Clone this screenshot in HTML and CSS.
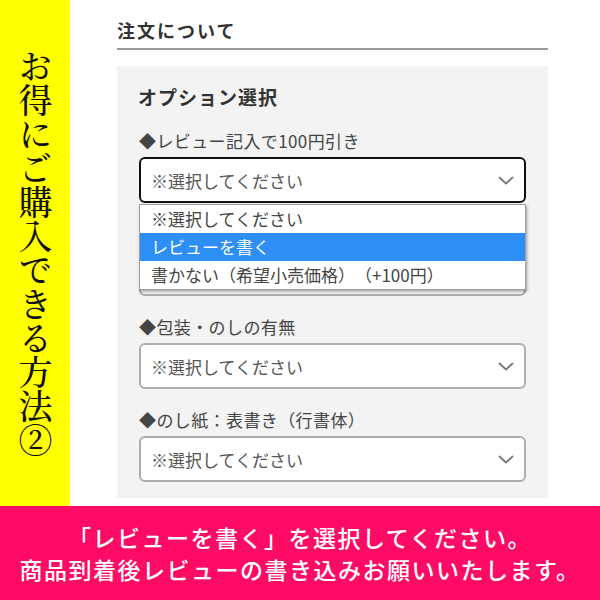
FILE: index.html
```html
<!DOCTYPE html>
<html lang="ja">
<head>
  <meta charset="UTF-8">
  <meta name="viewport" content="width=device-width, initial-scale=1.0">
  <title>お得にご購入できる方法②</title>
  <link rel="stylesheet" href="styles.css">
</head>
<body>
  <div class="top">
    <div class="side">
      <p class="side-title">お得にご購入できる方法②</p>
    </div>

    <div class="main">
      <h1 class="section-title">注文について</h1>

      <div class="panel">
        <h2>オプション選択</h2>

        <div class="field">
          <label>◆レビュー記入で100円引き</label>
          <div class="select-wrap">
            <div class="select is-open">
              <span>※選択してください</span>
              <svg class="chevron" width="16" height="9" viewBox="0 0 16 9"><polyline points="1.5,1.5 8,7.5 14.5,1.5" fill="none" stroke="#777" stroke-width="1.8" stroke-linecap="round" stroke-linejoin="round"/></svg>
            </div>
            <ul class="dropdown">
              <li>※選択してください</li>
              <li class="active">レビューを書く</li>
              <li>書かない（希望小売価格）（+100円）</li>
            </ul>
          </div>
        </div>

        <!-- covered by the open dropdown -->
        <div class="field">
          <label class="blank"></label>
          <div class="select">
            <span></span>
            <svg class="chevron" width="16" height="9" viewBox="0 0 16 9"><polyline points="1.5,1.5 8,7.5 14.5,1.5" fill="none" stroke="#777" stroke-width="1.8" stroke-linecap="round" stroke-linejoin="round"/></svg>
          </div>
        </div>

        <div class="field">
          <label>◆包装・のしの有無</label>
          <div class="select">
            <span>※選択してください</span>
            <svg class="chevron" width="16" height="9" viewBox="0 0 16 9"><polyline points="1.5,1.5 8,7.5 14.5,1.5" fill="none" stroke="#777" stroke-width="1.8" stroke-linecap="round" stroke-linejoin="round"/></svg>
          </div>
        </div>

        <div class="field">
          <label>◆のし紙：表書き（行書体）</label>
          <div class="select">
            <span>※選択してください</span>
            <svg class="chevron" width="16" height="9" viewBox="0 0 16 9"><polyline points="1.5,1.5 8,7.5 14.5,1.5" fill="none" stroke="#777" stroke-width="1.8" stroke-linecap="round" stroke-linejoin="round"/></svg>
          </div>
        </div>
      </div>
    </div>
  </div>

  <div class="banner">
    <p>「レビューを書く」を選択してください。</p>
    <p>商品到着後レビューの書き込みお願いいたします。</p>
  </div>
</body>
</html>
```

FILE: styles.css
```css
body {
  margin: 0;
  font-family: "Noto Sans CJK JP", sans-serif;
  color: #333;
  background: #fff;
  text-spacing-trim: space-all;
}
.top {
  display: flex;
  height: 506px;
}
.side {
  width: 70px;
  background-color: #ffff00;
  display: flex;
  align-items: center;
  justify-content: center;
}
.side-title {
  margin: 0;
  writing-mode: vertical-rl;
  text-orientation: upright;
  font-family: "Noto Serif CJK JP", "IPAMincho", "Noto Sans CJK JP", serif;
  font-weight: 500;
  font-size: 34px;
  letter-spacing: 0;
  line-height: 1;
  color: #111;
}
.main {
  flex: 1;
  padding: 17px 52px 0 47px;
}
.section-title {
  margin: 0;
  font-size: 18px;
  line-height: 26px;
  letter-spacing: 2px;
  font-weight: bold;
  color: #333;
  padding-bottom: 5px;
  border-bottom: 2px solid #9a9a9a;
}
.panel {
  margin-top: 16px;
  background-color: #f3f3f3;
  padding: 18px 22px 16px;
}
.panel h2 {
  margin: 0 0 19px -1px;
  font-size: 19px;
  line-height: 26px;
  letter-spacing: 1px;
  font-weight: bold;
  color: #333;
}
.field {
  display: flex;
  flex-direction: column;
  gap: 4px;
  margin-bottom: 19px;
}
.field:last-child {
  margin-bottom: 0;
}
.field label {
  font-size: 17px;
  line-height: 24px;
  min-height: 24px;
  letter-spacing: 0.4px;
  color: #444;
}
.select-wrap {
  position: relative;
}
.select {
  height: 46px;
  box-sizing: border-box;
  border: 2px solid #adadad;
  border-radius: 6px;
  background: #fff;
  display: flex;
  align-items: center;
  justify-content: space-between;
  padding: 0 10px;
  font-size: 17px;
  color: #555;
}
.select.is-open {
  border-color: #111;
}
.chevron {
  flex-shrink: 0;
}
.dropdown {
  position: absolute;
  top: 47px;
  left: 0;
  right: 0;
  margin: 0;
  padding: 0;
  list-style: none;
  background: #fff;
  border: 1px solid #a0a0a0;
  box-shadow: 1px 2px 3px rgba(0, 0, 0, 0.35);
  z-index: 2;
}
.dropdown li {
  height: 28px;
  line-height: 28px;
  padding-left: 11px;
  font-size: 17px;
  color: #444;
}
.dropdown li.active {
  background-color: #2d8ef5;
  color: #fff;
}
.banner {
  height: 94px;
  background-color: #fe0b65;
  color: #fff;
  display: flex;
  flex-direction: column;
  justify-content: center;
  align-items: center;
}
.banner p {
  margin: 0;
  font-size: 23px;
  line-height: 32px;
  letter-spacing: 1.5px;
  font-weight: 500;
}
```
